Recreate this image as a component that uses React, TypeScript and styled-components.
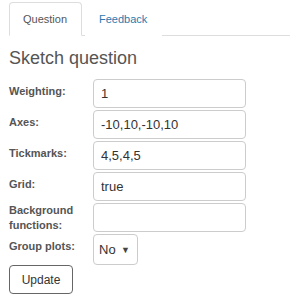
import React from "react";
import styled, { createGlobalStyle } from "styled-components";

const GlobalStyle = createGlobalStyle`
  body {
    margin: 0;
    background: #ffffff;
    font-family: "Liberation Sans", Arial, sans-serif;
    color: #333;
  }
`;

const Page = styled.div`
  padding: 2px 0 0 9px;
  width: 290px;
  box-sizing: border-box;
`;

const TabBar = styled.ul`
  display: flex;
  margin: 0;
  padding: 0;
  list-style: none;
  border-bottom: 1px solid #ddd;
  height: 33px;
`;

const Tab = styled.li<{ $active?: boolean }>`
  display: flex;
  align-items: center;
  padding: 0 14px 0 13px;
  margin-right: 3px;
  font-size: 11px;
  color: ${(p) => (p.$active ? "#555" : "#2a7ab0")};
  border: 1px solid ${(p) => (p.$active ? "#ddd" : "transparent")};
  border-bottom-color: ${(p) => (p.$active ? "#fff" : "transparent")};
  border-radius: 4px 4px 0 0;
  margin-bottom: -1px;
  background: #fff;
  box-sizing: border-box;
  height: 34px;
`;

const Title = styled.h3`
  margin: 11px 0 10px;
  font-size: 18px;
  font-weight: normal;
  color: #555;
  line-height: 22px;
`;

const Form = styled.div`
  display: grid;
  grid-template-columns: 84px 153px;
  grid-auto-rows: 29px;
  row-gap: 2px;
  align-items: start;
`;

const Label = styled.label<{ $multi?: boolean }>`
  font-size: 11px;
  font-weight: bold;
  color: #555;
  line-height: 15px;
  padding-top: ${(p) => (p.$multi ? "0" : "5px")};
`;

const Input = styled.input`
  box-sizing: border-box;
  width: 153px;
  height: 29px;
  border: 1px solid #ccc;
  border-radius: 4px;
  padding: 0 7px;
  font-family: "Liberation Sans", Arial, sans-serif;
  font-size: 13px;
  color: #333;
`;

const SelectBox = styled.div`
  box-sizing: border-box;
  width: 45px;
  height: 31px;
  border: 1px solid #ccc;
  border-radius: 4px;
  display: flex;
  align-items: center;
  justify-content: space-between;
  padding: 0 7px 0 5px;
  font-size: 13px;
  color: #333;
`;

const Arrow = styled.span`
  font-size: 9px;
  color: #444;
`;

const Button = styled.button`
  margin-top: 2px;
  width: 64px;
  height: 29px;
  border: 1px solid #666;
  border-radius: 4px;
  background: #fff;
  font-family: "Liberation Sans", Arial, sans-serif;
  font-size: 12px;
  color: #333;
  padding: 0;
`;

const fields: [string, string][] = [
  ["Weighting:", "1"],
  ["Axes:", "-10,10,-10,10"],
  ["Tickmarks:", "4,5,4,5"],
  ["Grid:", "true"],
  ["Background functions:", ""],
];

export default function App() {
  return (
    <Page>
      <GlobalStyle />
      <TabBar>
        <Tab $active>Question</Tab>
        <Tab>Feedback</Tab>
      </TabBar>
      <Title>Sketch question</Title>
      <Form>
        {fields.map(([label, value]) => (
          <React.Fragment key={label}>
            <Label $multi={label.length > 15}>{label}</Label>
            <Input defaultValue={value} />
          </React.Fragment>
        ))}
        <Label>Group plots:</Label>
        <SelectBox>
          <span>No</span>
          <Arrow>▼</Arrow>
        </SelectBox>
      </Form>
      <Button>Update</Button>
    </Page>
  );
}
